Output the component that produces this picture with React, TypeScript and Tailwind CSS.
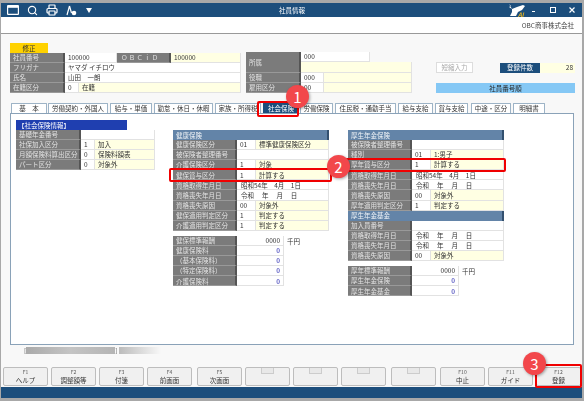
import type { ReactNode } from "react";
import { Printer, Search } from "lucide-react";
import { clsx } from "clsx";

const FONT = "font-['Noto_Sans_CJK_JP','Noto_Sans',sans-serif]";

const TABS: { label: string; width: string; margin: string; active?: boolean }[] = [
  { label: "基　本", width: "w-[36px]", margin: "ml-px" },
  { label: "労働契約・外国人", width: "w-[60px]", margin: "ml-[1px]" },
  { label: "給与・単価", width: "w-[42px]", margin: "ml-[2px]" },
  { label: "勤怠・休日・休暇", width: "w-[59px]", margin: "ml-[2px]" },
  { label: "家族・所得税", width: "w-[46px]", margin: "ml-[2px]" },
  { label: "社会保険", width: "w-[36px]", margin: "ml-[2px]", active: true },
  { label: "労働保険", width: "w-[33px]", margin: "ml-[1px]" },
  { label: "住民税・通勤手当", width: "w-[61px]", margin: "ml-[2px]" },
  { label: "給与支給", width: "w-[35px]", margin: "ml-[2px]" },
  { label: "賞与支給", width: "w-[33px]", margin: "ml-[2px]" },
  { label: "中途・区分", width: "w-[40px]", margin: "ml-[3px]" },
  { label: "明細書", width: "w-[32px]", margin: "ml-[2px]" },
];

const KEYS: { f?: string; label?: string; margin: string }[] = [
  { f: "F1", label: "ヘルプ", margin: "ml-[2px]" },
  { f: "F2", label: "調整額等", margin: "ml-[3px]" },
  { f: "F3", label: "付箋", margin: "ml-[3px]" },
  { f: "F4", label: "前画面", margin: "ml-[3px]" },
  { f: "F5", label: "次画面", margin: "ml-[5px]" },
  { margin: "ml-[3px]" },
  { margin: "ml-[3px]" },
  { margin: "ml-[3px]" },
  { margin: "ml-[5px]" },
  { f: "F10", label: "中止", margin: "ml-[4px]" },
  { f: "F11", label: "ガイド", margin: "ml-[3px]" },
  { f: "F12", label: "登録", margin: "ml-[3px]" },
];

function Label({ children, className }: { children?: ReactNode; className?: string }) {
  return (
    <div
      className={clsx(
        "flex items-center whitespace-nowrap border-r-2 border-b border-r-[#555] border-b-[#999] bg-[#7b7b7b] pl-[3px] text-[#e2e2e2]",
        className,
      )}
    >
      {children}
    </div>
  );
}

function Cell({
  children,
  yellow,
  right,
  blue,
  className,
}: {
  children?: ReactNode;
  yellow?: boolean;
  right?: boolean;
  blue?: boolean;
  className?: string;
}) {
  return (
    <div
      className={clsx(
        "flex items-center whitespace-nowrap border-r border-b border-[#e2e2e2] px-[3px]",
        yellow ? "bg-[#ffffe3]" : "bg-white",
        right && "justify-end",
        blue ? "font-bold text-[#6a6ac8]" : "text-[#333]",
        className,
      )}
    >
      {children}
    </div>
  );
}

function Row({ label, code, text, wide }: { label: string; code?: string; text?: string; wide?: string }) {
  return (
    <div className="grid h-[10.1px] grid-cols-[64px_19px_1fr]">
      <Label>{label}</Label>
      {wide !== undefined ? (
        <Cell className="col-span-2 pl-[4px]">{wide}</Cell>
      ) : code ? (
        <>
          <Cell>{code}</Cell>
          <Cell yellow>{text}</Cell>
        </>
      ) : (
        <Cell className="col-span-2" />
      )}
    </div>
  );
}

function SectionHead({ children }: { children: ReactNode }) {
  return (
    <div className="flex h-[10px] items-center border-r-2 border-[#33506f] bg-[#6384a8] pl-[3px] text-[#eef2f6]">
      {children}
    </div>
  );
}

function AmountRow({ label, value, blue, unit }: { label: string; value: string; blue?: boolean; unit?: boolean }) {
  return (
    <div className="flex h-[10.1px] w-[156px]">
      <Label className="w-[64px]">{label}</Label>
      <Cell right blue={blue} className="w-[47px]">
        {value}
      </Cell>
      {unit && <span className="ml-[3px] flex items-center text-[#333]">千円</span>}
    </div>
  );
}

function Overlay({ n, className }: { n: number; className: string }) {
  return (
    <div
      className={clsx(
        "absolute flex h-[23px] w-[23px] items-center justify-center rounded-full bg-[#f2474b] text-[15px] text-white shadow-[1px_1px_3px_rgba(0,0,0,0.35)]",
        className,
      )}
    >
      {n}
    </div>
  );
}

export default function App() {
  return (
    <div className={clsx("relative h-[401px] w-[584px] overflow-hidden bg-[#a8a8a8] pt-[3px] pr-[2px] pb-[3px] pl-px text-[6.5px] leading-none", FONT)}>
      <div className="flex h-[395px] flex-col blur-[0.3px]">
        {/* title bar */}
        <div className="flex h-[14px] items-center bg-[#1c4e7c] text-white">
          <div className="ml-[6px] flex items-center gap-[8px]">
            <svg width="12" height="10" viewBox="0 0 12 10" fill="none">
              <rect x="0.6" y="0.6" width="10.8" height="8.8" rx="0.5" stroke="white" strokeWidth="1.2" />
              <rect x="0.6" y="0.6" width="10.8" height="2.2" fill="white" />
            </svg>
            <Search size={11} strokeWidth={2.4} />
            <Printer size={12} strokeWidth={2.4} />
            <svg width="11" height="11" viewBox="0 0 11 11" fill="none">
              <path d="M3.5 1 L1 10 M3.5 1 L5.5 8" stroke="white" strokeWidth="1.2" />
              <circle cx="8" cy="8" r="2.3" fill="white" />
            </svg>
            <svg width="6" height="5" viewBox="0 0 6 5" className="ml-px">
              <path d="M0 0 H6 L3 5 Z" fill="white" />
            </svg>
          </div>
          <div className="ml-[175px] w-[50px] text-center">社員情報</div>
          <div className="ml-auto flex items-center">
            <svg width="18" height="13" viewBox="0 0 18 13">
              <path d="M1 0 L3 2 L1 3 L4 5 L9 3 L15 1 L17 2 L14 6 L10 8 L8 12 L2 12 L4 8 L4 5 Z" fill="white" />
              <text x="10" y="12.5" fontSize="6" fontWeight="700" fontStyle="italic" fill="#e6b422">AI</text>
            </svg>
            <div className="ml-[6px] mt-[3px] h-px w-[3px] bg-white" />
            <div className="ml-[15px] h-[6px] w-[6px] border border-white" />
            <svg width="6" height="6" viewBox="0 0 6 6" className="mr-[7px] ml-[13px]">
              <path d="M0.5 0.5 L5.5 5.5 M5.5 0.5 L0.5 5.5" stroke="white" strokeWidth="1.2" />
            </svg>
          </div>
        </div>
        <div className="flex h-[16px] items-center justify-end bg-white pr-[8px] text-[#444]">OBC商事株式会社</div>
        <div className="h-px bg-[#999]" />

        {/* body */}
        <div className="flex flex-1 flex-col bg-[#f8f8f8]">
          <div className="ml-[9px] mt-[9px] flex h-[50px]">
            <div className="flex flex-col">
              <div className="flex h-[10px] w-[38px] items-center justify-center bg-[#ffd200] text-[#333]">修正</div>
              <div className="grid h-[10px] w-[231px] grid-cols-[55px_52px_54px_1fr]">
                <Label>社員番号</Label>
                <Cell>100000</Cell>
                <Label className="pl-[4px] tracking-[1.2px]">ＯＢＣｉＤ</Label>
                <Cell yellow>100000</Cell>
              </div>
              <div className="grid h-[10px] w-[231px] grid-cols-[55px_1fr]">
                <Label>フリガナ</Label>
                <Cell>ヤマダ イチロウ</Cell>
              </div>
              <div className="grid h-[10px] w-[231px] grid-cols-[55px_1fr]">
                <Label>氏名</Label>
                <Cell>山田　一朗</Cell>
              </div>
              <div className="grid h-[10px] w-[231px] grid-cols-[55px_14px_1fr]">
                <Label>在籍区分</Label>
                <Cell>0</Cell>
                <Cell yellow>在籍</Cell>
              </div>
            </div>

            <div className="ml-[5px] mt-[9px] grid h-[41px] w-[166px] grid-cols-[55px_23px_46px_1fr] grid-rows-4">
              <Label className="row-span-2">所属</Label>
              <Cell className="col-span-2">000</Cell>
              <div />
              <Cell yellow className="col-span-3" />
              <Label>役職</Label>
              <Cell>000</Cell>
              <Cell yellow className="col-span-2" />
              <Label>雇用区分</Label>
              <Cell>00</Cell>
              <Cell yellow className="col-span-2" />
            </div>

            <div className="ml-[24px] mt-[19px] flex w-[139px] flex-col">
              <div className="flex h-[11px] items-center">
                <div className="flex h-[11px] w-[37px] items-center justify-center border border-[#ddd] bg-white text-[#aaa]">短縮入力</div>
                <div className="ml-[27px] flex h-[10px] w-[40px] items-center justify-center bg-[#1c4e7c] text-white">登録件数</div>
                <div className="flex h-[10px] flex-1 items-center justify-end bg-[#ffffe3] pr-[2px] text-[#333]">28</div>
              </div>
              <div className="mt-[10px] flex h-[10px] items-center justify-center bg-[#85c8f5] text-[#222]">社員番号順</div>
            </div>
          </div>

          {/* tabs */}
          <div className="ml-[9px] mt-[10px] flex h-[10px] items-end">
            {TABS.map((t) => (
              <div
                key={t.label}
                className={clsx(
                  "flex h-[10px] items-center justify-center whitespace-nowrap rounded-t-[1px] border border-b-0",
                  t.width,
                  t.margin,
                  t.active ? "border-[#1c4e7c] bg-[#1c4e7c] text-white" : "border-[#9db3c6] bg-white text-[#333]",
                )}
              >
                {t.label}
              </div>
            ))}
          </div>

          <div className="ml-[9px] flex h-[232px] w-[564px] border border-[#8aa2b8] bg-white pl-[5px] pt-[6px]">
            <div className="w-[139px]">
              <div className="flex h-[10px] w-[111px] items-center bg-[#1f3fb0] pl-[2px] text-white">【社会保険情報】</div>
              <div className="grid h-[10px] grid-cols-[65px_14px_1fr]">
                <Label>基礎年金番号</Label>
                <Cell className="col-span-2" />
              </div>
              <div className="grid h-[10px] grid-cols-[65px_14px_1fr]">
                <Label>社保加入区分</Label>
                <Cell>1</Cell>
                <Cell yellow>加入</Cell>
              </div>
              <div className="grid h-[10px] grid-cols-[65px_14px_1fr]">
                <Label className="pl-[2px]">月額保険料算出区分</Label>
                <Cell>0</Cell>
                <Cell yellow>保険料額表</Cell>
              </div>
              <div className="grid h-[10px] grid-cols-[65px_14px_1fr]">
                <Label>パート区分</Label>
                <Cell>0</Cell>
                <Cell yellow>対象外</Cell>
              </div>
            </div>

            <div className="ml-[18px] mt-[10px] w-[156px]">
              <SectionHead>健康保険</SectionHead>
              <Row label="健康保険区分" code="01" text="標準健康保険区分" />
              <Row label="被保険者整理番号" />
              <Row label="介護保険区分" code="1" text="対象" />
              <Row label="健保賞与区分" code="1" text="計算する" />
              <Row label="資格取得年月日" wide="昭和54年　4月　1日" />
              <Row label="資格喪失年月日" wide="令和　 年　 月　 日" />
              <Row label="資格喪失原因" code="00" text="対象外" />
              <Row label="健保適用判定区分" code="1" text="判定する" />
              <Row label="介護適用判定区分" code="1" text="判定する" />
              <div className="mt-[5px]">
                <AmountRow label="健保標準報酬" value="0000" unit />
                <AmountRow label="健康保険料" value="0" blue />
                <AmountRow label="（基本保険料）" value="0" blue />
                <AmountRow label="（特定保険料）" value="0" blue />
                <AmountRow label="介護保険料" value="0" blue />
              </div>
            </div>

            <div className="ml-[19px] mt-[10px] w-[156px]">
              <SectionHead>厚生年金保険</SectionHead>
              <Row label="被保険者整理番号" />
              <Row label="種別" code="01" text="1:男子" />
              <Row label="厚年賞与区分" code="1" text="計算する" />
              <Row label="資格取得年月日" wide="昭和54年　4月　1日" />
              <Row label="資格喪失年月日" wide="令和　 年　 月　 日" />
              <Row label="資格喪失原因" code="00" text="対象外" />
              <Row label="厚年適用判定区分" code="1" text="判定する" />
              <SectionHead>厚生年金基金</SectionHead>
              <Row label="加入員番号" />
              <Row label="資格取得年月日" wide="令和　 年　 月　 日" />
              <Row label="資格喪失年月日" wide="令和　 年　 月　 日" />
              <Row label="資格喪失原因" code="00" text="対象外" />
              <div className="mt-[5px]">
                <AmountRow label="厚年標準報酬" value="0000" unit />
                <AmountRow label="厚生年金保険" value="0" blue />
                <AmountRow label="厚生年金基金" value="0" blue />
              </div>
            </div>
          </div>

          {/* masked message line */}
          <div className="ml-[23px] mt-px flex h-[9px] items-center text-[#666]">
            <span>[</span>
            <div className="h-[7px] w-[89px] bg-linear-to-r from-[#aaa] via-[#c4c4c4] to-[#b4b4b4]" />
            <span>]</span>
            <div className="ml-[2px] h-[7px] w-[42px] bg-linear-to-r from-[#bbb] to-[#f8f8f8]" />
          </div>

          {/* function keys */}
          <div className="mt-[12px] flex h-[19px]">
            {KEYS.map((k, i) => (
              <div
                key={i}
                className={clsx(
                  "flex h-[19px] w-[45px] flex-col items-center rounded-[2px] border border-[#bdbdbd] bg-[#f0f0f0] text-[#333]",
                  k.margin,
                )}
              >
                {k.f ? (
                  <>
                    <span className="mt-px h-[6px] text-[5px] leading-[6px] text-[#555]">{k.f}</span>
                    <span className="mt-[2px] whitespace-nowrap">{k.label}</span>
                  </>
                ) : (
                  <span className="h-[6px] w-[13px] border border-t-0 border-[#ccc] bg-[#e8e8e8]" />
                )}
              </div>
            ))}
          </div>
          <div className="mt-px h-[11px] bg-[#1c4e7c]" />
        </div>
      </div>

      {/* callouts laid over the screen */}
      <div className="absolute left-[257px] top-[101px] h-[16px] w-[42px] rounded-[2px] border-2 border-[#f00000]" />
      <div className="absolute left-[169px] top-[168px] h-[14px] w-[163px] rounded-[2px] border-2 border-[#f00000]" />
      <div className="absolute left-[345px] top-[158px] h-[14px] w-[161px] rounded-[2px] border-2 border-[#f00000]" />
      <div className="absolute left-[535px] top-[364px] h-[24px] w-[47px] rounded-[2px] border-2 border-[#f00000]" />
      <Overlay n={1} className="left-[286px] top-[85px]" />
      <Overlay n={2} className="left-[327px] top-[155px]" />
      <Overlay n={3} className="left-[523px] top-[352px]" />
    </div>
  );
}
